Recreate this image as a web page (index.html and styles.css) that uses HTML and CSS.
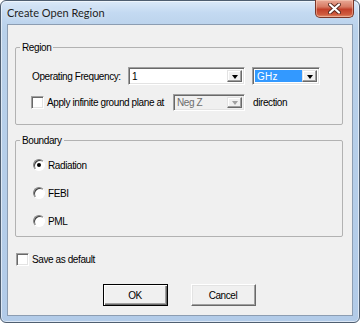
FILE: index.html
```html
<!DOCTYPE html>
<html lang="en">
<head>
    <meta charset="UTF-8">
    <title>Create Open Region</title>
    <link rel="stylesheet" href="styles.css">
</head>
<body>
    <div class="window">
        <div class="titlebar">
            <span class="title">Create Open Region</span>
            <button class="close" aria-label="Close">
                <svg width="13" height="11" viewBox="0 0 13 11">
                    <path d="M2 1.5 L11 9.5 M11 1.5 L2 9.5" stroke="#5a2a20" stroke-width="4" stroke-linecap="round"/>
                    <path d="M2 1.5 L11 9.5 M11 1.5 L2 9.5" stroke="#ffffff" stroke-width="2.2" stroke-linecap="round"/>
                </svg>
            </button>
        </div>

        <div class="client">
            <fieldset class="group region">
                <legend>Region</legend>
                <div class="row">
                    <span class="label freq-label">Operating Frequency:</span>
                    <div class="combo freq">
                        <span class="combo-text">1</span>
                        <span class="combo-btn"><i class="arrow"></i></span>
                    </div>
                    <div class="combo unit">
                        <span class="combo-text"><span class="selected">GHz</span></span>
                        <span class="combo-btn"><i class="arrow"></i></span>
                    </div>
                </div>
                <div class="row row-ground">
                    <span class="check"></span>
                    <span class="label ground-label">Apply infinite ground plane at</span>
                    <div class="combo axis disabled">
                        <span class="combo-text">Neg Z</span>
                        <span class="combo-btn"><i class="arrow"></i></span>
                    </div>
                    <span class="label direction">direction</span>
                </div>
            </fieldset>

            <fieldset class="group boundary">
                <legend>Boundary</legend>
                <div class="radio-row">
                    <span class="radio checked"></span>
                    <span class="label">Radiation</span>
                </div>
                <div class="radio-row">
                    <span class="radio"></span>
                    <span class="label">FEBI</span>
                </div>
                <div class="radio-row">
                    <span class="radio"></span>
                    <span class="label">PML</span>
                </div>
            </fieldset>

            <div class="save-row">
                <span class="check"></span>
                <span class="label">Save as default</span>
            </div>

            <div class="buttons">
                <button class="btn default">OK</button>
                <button class="btn">Cancel</button>
            </div>
        </div>
    </div>
</body>
</html>
```

FILE: styles.css
```css
* {
    box-sizing: border-box;
    margin: 0;
    padding: 0;
}

body {
    width: 360px;
    height: 323px;
    background: #ffffff;
    font-family: 'Liberation Sans', Arial, sans-serif;
    font-size: 10px;
    letter-spacing: -0.4px;
    color: #000;
}

.window {
    width: 360px;
    height: 323px;
    display: flex;
    flex-direction: column;
    border: 1px solid #4f5e70;
    border-radius: 6px;
    background: linear-gradient(to bottom, #dbe9f8 0px, #c3d9f1 12px, #b9d1ea 30px, #b2cbe8 100%);
    box-shadow: inset 0 0 0 1px rgba(255, 255, 255, 0.55);
}

.titlebar {
    height: 23px;
    display: flex;
    align-items: center;
    justify-content: space-between;
    padding-left: 6px;
}

.title {
    font-family: Lato, 'Liberation Sans', sans-serif;
    font-size: 11px;
    letter-spacing: 0;
    color: #1e1e1e;
    text-shadow: 0 0 6px rgba(255, 255, 255, 0.9);
}

.close {
    align-self: flex-start;
    width: 39px;
    height: 18px;
    margin-top: -1px;
    margin-right: 5px;
    border: 1px solid #7a3527;
    border-top: none;
    border-radius: 0 0 5px 5px;
    background: linear-gradient(to bottom, #e9a997 0%, #d77a63 40%, #c2402a 55%, #cf5b3e 85%, #e09070 100%);
    box-shadow: inset 0 0 0 1px rgba(255, 220, 200, 0.45);
    display: flex;
    align-items: center;
    justify-content: center;
}

.client {
    flex: 1;
    margin: 0 6px 6px 6px;
    border: 1px solid #8c9db2;
    background: #f0f0f0;
    padding: 16px 9px 0 7px;
    display: flex;
    flex-direction: column;
}

.group {
    border: 1px solid #b2b2b2;
    border-radius: 2px;
}

.group legend {
    line-height: 13px;
    padding: 0 2px;
    margin-left: 4px;
}

.region {
    padding: 13px 0 13px 0;
}

.region .row {
    padding-left: 16px;
}

.boundary {
    margin-top: 9px;
    padding: 11px 0 8px 0;
}

.row {
    display: flex;
    align-items: center;
    height: 18px;
}

.row-ground {
    margin-top: 9px;
    height: 17px;
}

.label {
    white-space: nowrap;
}

.freq-label {
    width: 96px;
}

.ground-label {
    width: 126px;
}

.direction {
    margin-left: 8px;
}

/* sunken classic checkbox */
.check {
    width: 13px;
    height: 13px;
    background: #fff;
    border: 1px solid;
    border-color: #a0a0a0 #ffffff #ffffff #a0a0a0;
    box-shadow: inset 1px 1px 0 #696969, inset -1px -1px 0 #e3e3e3;
    flex-shrink: 0;
}

.row-ground .check {
    margin-left: -1px;
    margin-right: 3px;
}

/* combo boxes */
.combo {
    display: flex;
    height: 18px;
    background: #fff;
    border: 1px solid;
    border-color: #a0a0a0 #ffffff #ffffff #a0a0a0;
    box-shadow: inset 1px 1px 0 #696969, inset -1px -1px 0 #e3e3e3;
    padding: 2px;
}

.combo-text {
    flex: 1;
    display: flex;
    align-items: center;
    padding-left: 1px;
    line-height: 13px;
}

.combo-btn {
    width: 15px;
    background: #f0f0f0;
    border: 1px solid;
    border-color: #e3e3e3 #696969 #696969 #e3e3e3;
    box-shadow: inset -1px -1px 0 #a0a0a0, inset 1px 1px 0 #fff;
    display: flex;
    align-items: center;
    justify-content: center;
}

.arrow {
    width: 0;
    height: 0;
    border-left: 3.5px solid transparent;
    border-right: 3.5px solid transparent;
    border-top: 4px solid #000;
    margin-top: 1px;
}

.freq {
    width: 117px;
}

.unit {
    width: 68px;
    margin-left: 7px;
}

.unit .combo-text {
    padding-left: 0;
}

.selected {
    background: #3399ff;
    color: #fff;
    width: 100%;
    height: 100%;
    display: flex;
    align-items: center;
    padding-left: 2px;
    letter-spacing: 0.2px;
}

.axis {
    width: 72px;
    height: 17px;
    background: #f0f0f0;
}

.disabled .combo-text {
    color: #6d6d6d;
}

.disabled .arrow {
    border-top-color: #a0a0a0;
}

/* radios */
.radio-row {
    display: flex;
    align-items: center;
    height: 14px;
    padding-left: 17px;
}

.radio-row + .radio-row {
    margin-top: 14px;
}

.radio {
    width: 12px;
    height: 12px;
    border-radius: 50%;
    background: #fff;
    border: 1px solid;
    border-color: #808080 #ffffff #ffffff #808080;
    box-shadow: inset 1px 1px 0 #404040;
    margin-right: 3px;
    display: flex;
    align-items: center;
    justify-content: center;
}

.radio.checked::after {
    content: '';
    width: 4px;
    height: 4px;
    border-radius: 50%;
    background: #000;
}

.save-row {
    display: flex;
    align-items: center;
    height: 14px;
    margin-top: 15px;
    padding-left: 1px;
}

.save-row .check {
    margin-right: 3px;
}

.buttons {
    display: flex;
    justify-content: center;
    gap: 23px;
    margin-top: 18px;
}

.btn {
    width: 65px;
    height: 22px;
    font-family: 'Liberation Sans', Arial, sans-serif;
    font-size: 10px;
    letter-spacing: -0.4px;
    color: #000;
    background: #f0f0f0;
    border: 1px solid;
    border-color: #ffffff #696969 #696969 #ffffff;
    box-shadow: inset -1px -1px 0 #a0a0a0, inset 1px 1px 0 #e3e3e3;
}

.btn.default {
    border: 1px solid #000;
    box-shadow: inset 1px 1px 0 #fff, inset -1px -1px 0 #696969, inset -2px -2px 0 #a0a0a0;
}
```
